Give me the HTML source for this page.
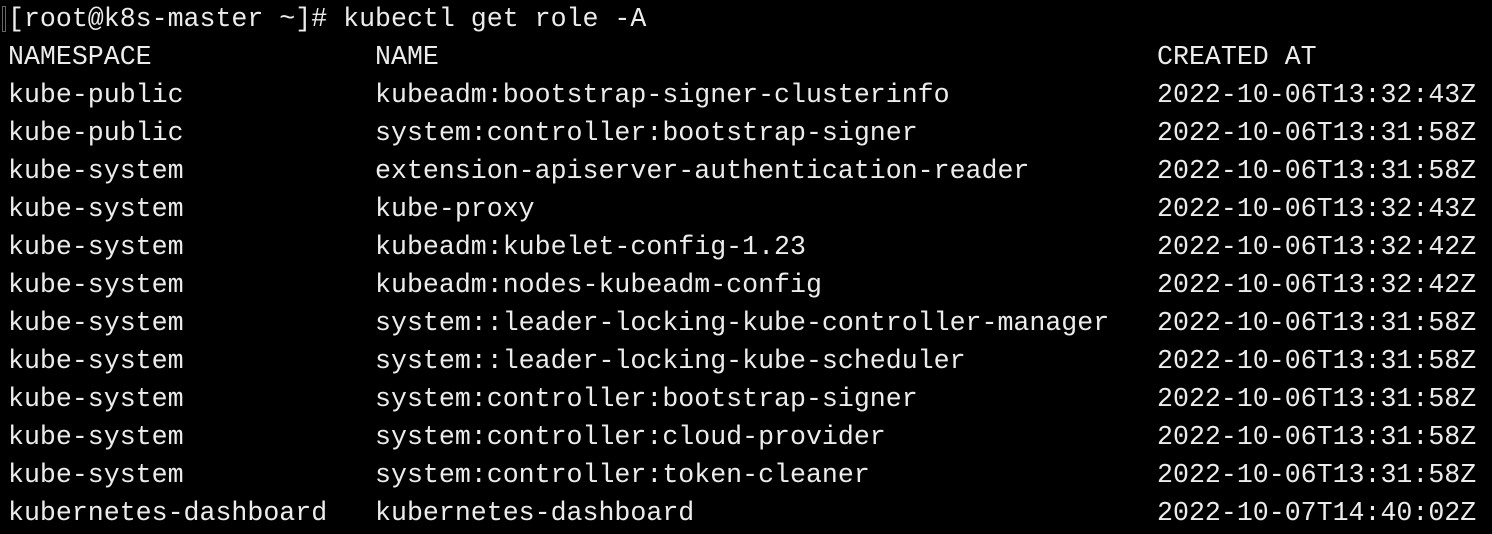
<!DOCTYPE html>
<html><head><style>
html,body{margin:0;padding:0;background:#000;width:1492px;height:534px;overflow:hidden}
pre{margin:0;position:absolute;left:8px;top:0px;font-family:"Liberation Mono","DejaVu Sans Mono",monospace;font-size:26.6px;line-height:38px;color:#ececec;white-space:pre}
.c{position:absolute;left:2px;top:6px;width:4px;height:26px;border:1px solid #666;box-sizing:border-box}
</style></head><body>
<div class="c"></div>
<pre>[root@k8s-master ~]# kubectl get role -A
NAMESPACE              NAME                                             CREATED AT
kube-public            kubeadm:bootstrap-signer-clusterinfo             2022-10-06T13:32:43Z
kube-public            system:controller:bootstrap-signer               2022-10-06T13:31:58Z
kube-system            extension-apiserver-authentication-reader        2022-10-06T13:31:58Z
kube-system            kube-proxy                                       2022-10-06T13:32:43Z
kube-system            kubeadm:kubelet-config-1.23                      2022-10-06T13:32:42Z
kube-system            kubeadm:nodes-kubeadm-config                     2022-10-06T13:32:42Z
kube-system            system::leader-locking-kube-controller-manager   2022-10-06T13:31:58Z
kube-system            system::leader-locking-kube-scheduler            2022-10-06T13:31:58Z
kube-system            system:controller:bootstrap-signer               2022-10-06T13:31:58Z
kube-system            system:controller:cloud-provider                 2022-10-06T13:31:58Z
kube-system            system:controller:token-cleaner                  2022-10-06T13:31:58Z
kubernetes-dashboard   kubernetes-dashboard                             2022-10-07T14:40:02Z</pre>
</body></html>
